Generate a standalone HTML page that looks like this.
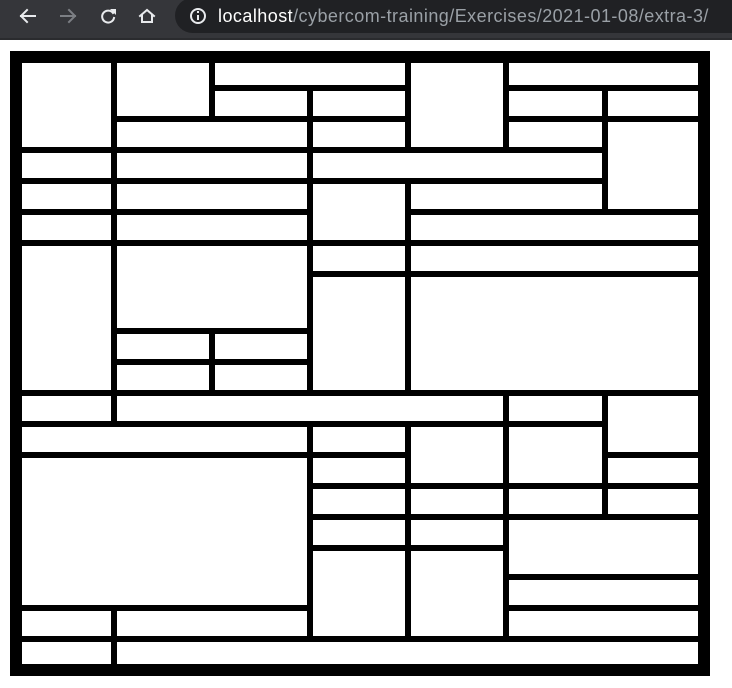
<!DOCTYPE html>
<html><head><style>
html,body{margin:0;padding:0;width:732px;height:688px;overflow:hidden;background:#fff;font-family:"Liberation Sans",sans-serif}
#bar{position:absolute;left:0;top:0;width:732px;height:38px;background:#35363a;border-bottom:2px solid #2a2b2e}
#pill{position:absolute;left:175px;top:-2px;width:580px;height:35px;background:#202124;border-radius:18px}
#url{position:absolute;left:218px;top:6px;font-size:18px;color:#9aa0a6;white-space:nowrap;letter-spacing:0.45px}
#url b{font-weight:normal;color:#fff}
svg.i{position:absolute}
#frame{position:absolute;left:10px;top:51px;width:700px;height:625px;background:#000}
.c{position:absolute;background:#fff}
</style></head><body>
<div id="bar"></div>
<div id="pill"></div>
<svg class="i" width="732" height="40" style="left:0;top:0">
 <g fill="none" stroke-width="2" stroke-linecap="square">
  <path d="M21 16h14M27 10l-6 6 6 6" stroke="#e8eaed"/>
  <path d="M61 16h14M69 10l6 6-6 6" stroke="#7c7f84"/>
  <path d="M113 13a6 6 0 1 0 1 5" stroke="#e8eaed"/>
  <path d="M140 16l7-6 7 6M142 15v7h10v-7" stroke="#e8eaed" stroke-linejoin="miter"/>
  <circle cx="198" cy="16" r="7" stroke="#e8eaed"/>
 </g>
 <path d="M110 9h6v6z" fill="#e8eaed"/>
 <rect x="197" y="15" width="2" height="5" fill="#e8eaed"/><rect x="197" y="11" width="2" height="2" fill="#e8eaed"/>
</svg>
<div id="url"><b>localhost</b>/cybercom-training/Exercises/2021-01-08/extra-3/</div>
<div id="frame"></div>
<div id="cells"></div>
<script>
var c=[
[22,63,111,147],[117,63,209,116],[215,63,405,85],[215,91,307,116],[313,91,405,116],
[117,122,307,147],[313,122,405,147],[411,63,503,147],[509,63,698,85],[509,91,602,116],[608,91,698,116],
[509,122,602,147],[608,122,698,209],
[22,153,111,178],[117,153,307,178],[313,153,602,178],
[22,184,111,209],[117,184,307,209],[313,184,405,240],[411,184,602,209],
[22,215,111,240],[117,215,307,240],[411,215,698,240],
[22,246,111,390],[117,246,307,328],[313,246,405,271],[411,246,698,271],
[117,334,209,359],[215,334,307,359],[117,365,209,390],[215,365,307,390],
[313,277,405,390],[411,277,698,390],
[22,396,111,421],[117,396,503,421],[509,396,602,421],[608,396,698,452],
[22,427,307,452],[313,427,405,452],[411,427,503,483],[509,427,602,483],
[22,458,307,605],[313,458,405,483],[608,458,698,483],
[313,489,405,514],[411,489,503,514],[509,489,602,514],[608,489,698,514],
[313,520,405,545],[411,520,503,545],[509,520,698,574],
[313,551,405,636],[411,551,503,636],[509,580,698,605],
[22,611,111,636],[117,611,307,636],[509,611,698,636],
[22,642,111,664],[117,642,698,664]];
var h='';c.forEach(function(r){h+='<div class="c" style="left:'+r[0]+'px;top:'+r[1]+'px;width:'+(r[2]-r[0])+'px;height:'+(r[3]-r[1])+'px"></div>';});
document.getElementById('cells').innerHTML=h;
</script>
</body></html>
